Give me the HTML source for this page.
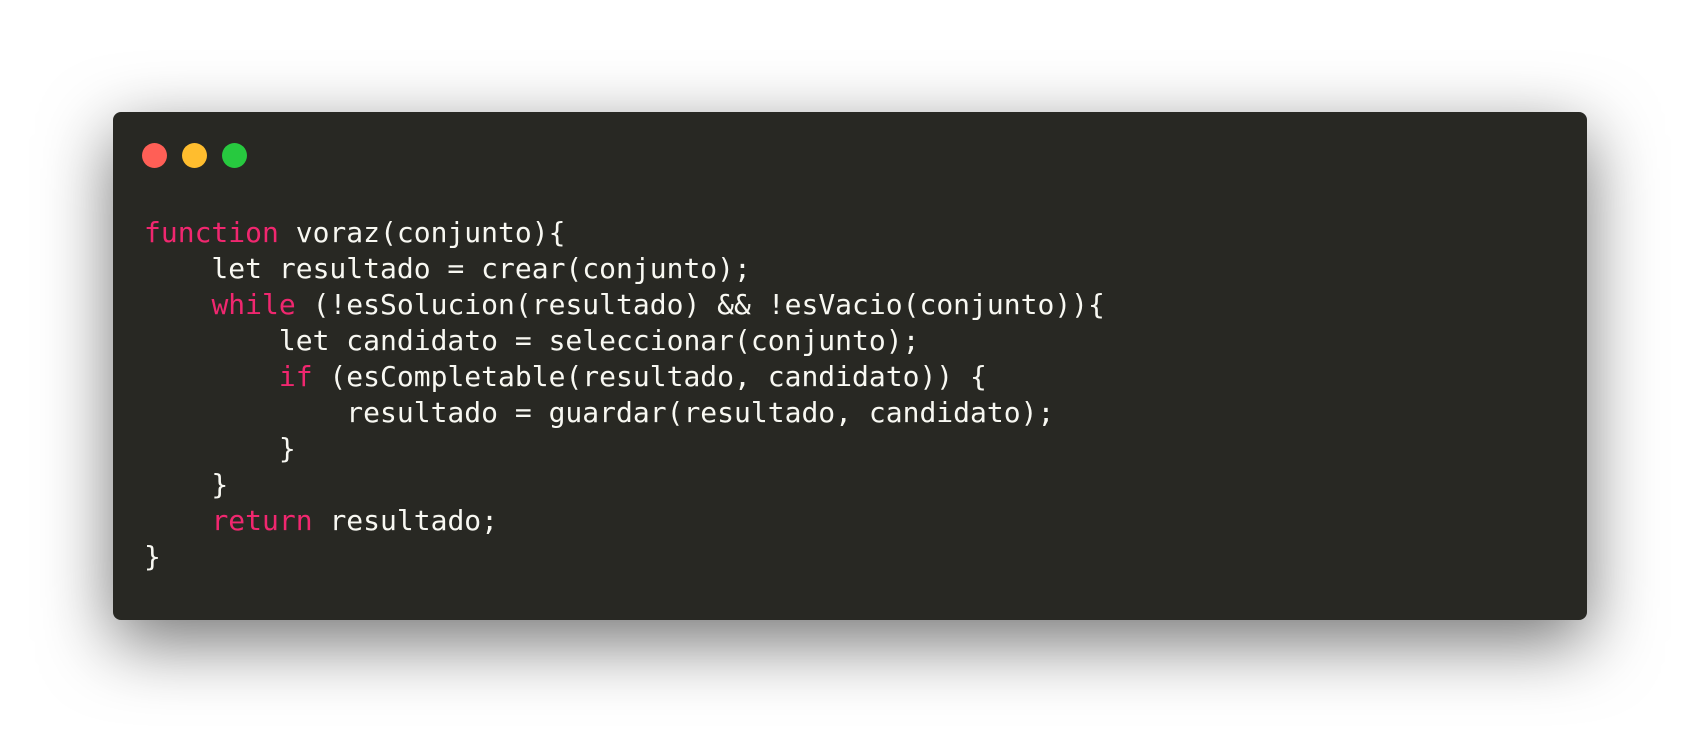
<!DOCTYPE html>
<html><head><meta charset="utf-8"><style>
html,body{margin:0;padding:0;width:1698px;height:732px;background:#fff;overflow:hidden}
.win{position:absolute;left:113px;top:112px;width:1474px;height:508px;background:#282823;border-radius:8px;box-shadow:0 22px 70px rgba(0,0,0,0.55)}
.dot{position:absolute;top:143px;width:25px;height:25px;border-radius:50%}
pre{position:absolute;left:144px;top:215px;margin:0;font-family:"DejaVu Sans Mono","Liberation Mono",monospace;font-size:28px;line-height:36px;color:#f8f8f2}
.k{color:#f0276f}
</style></head><body>
<div class="win"></div>
<div class="dot" style="left:142px;background:#ff5f56"></div>
<div class="dot" style="left:182px;background:#ffbd2e"></div>
<div class="dot" style="left:222px;background:#27c93f"></div>
<pre><span class="k">function</span> voraz(conjunto){
    let resultado = crear(conjunto);
    <span class="k">while</span> (!esSolucion(resultado) &amp;&amp; !esVacio(conjunto)){
        let candidato = seleccionar(conjunto);
        <span class="k">if</span> (esCompletable(resultado, candidato)) {
            resultado = guardar(resultado, candidato);
        }
    }
    <span class="k">return</span> resultado;
}</pre>
</body></html>
